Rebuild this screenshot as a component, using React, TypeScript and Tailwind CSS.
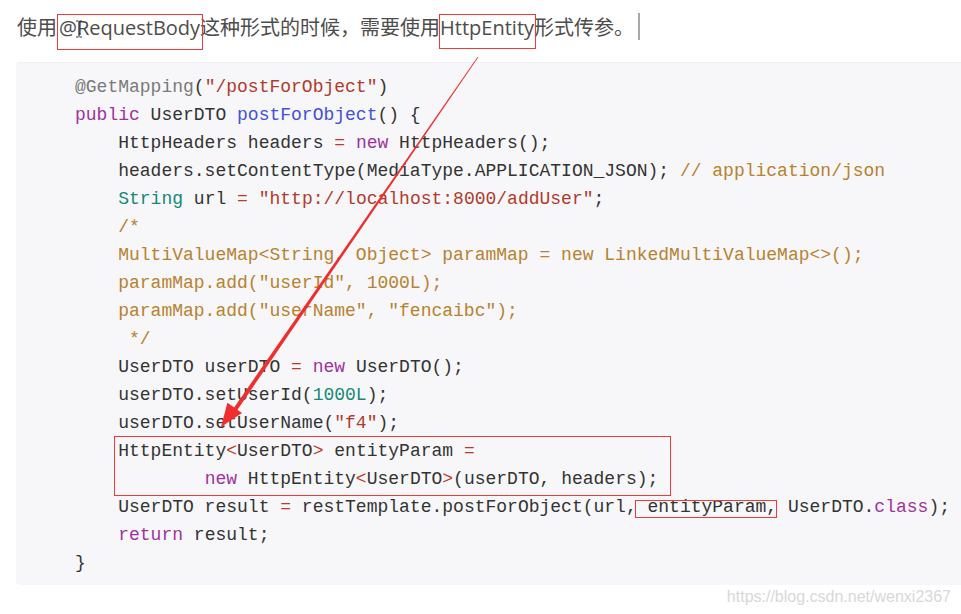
import React from "react";

type Tok = [string, string?];

const DARK = "text-[#333333]";
const KW = "text-[#a0329f]";
const FN = "text-[#4450dd]";
const STR = "text-[#b23a2c]";
const CMT = "text-[#b8822f]";
const TYPE = "text-[#168878]";
const OP = "text-[#c0392b]";
const ANN = "text-[#7a7a7a]";

const lines: Tok[][] = [
  [["@GetMapping", ANN], ["("], ['"/postForObject"', STR], [")"]],
  [["public", KW], [" UserDTO "], ["postForObject", FN], ["() {"]],
  [["    HttpHeaders headers "], ["=", OP], [" "], ["new", KW], [" HttpHeaders();"]],
  [["    headers.setContentType(MediaType.APPLICATION_JSON); "], ["// application/json", CMT]],
  [["    "], ["String", TYPE], [" url "], ["=", OP], [" "], ['"http://localhost:8000/addUser"', STR], [";"]],
  [["    /*", CMT]],
  [["    MultiValueMap<String, Object> paramMap = new LinkedMultiValueMap<>();", CMT]],
  [['    paramMap.add("userId", 1000L);', CMT]],
  [['    paramMap.add("userName", "fencaibc");', CMT]],
  [["     */", CMT]],
  [["    UserDTO userDTO "], ["=", OP], [" "], ["new", KW], [" UserDTO();"]],
  [["    userDTO.setUserId("], ["1000L", TYPE], [");"]],
  [["    userDTO.setUserName("], ['"f4"', STR], [");"]],
];

const boxed: Tok[][] = [
  [["    HttpEntity"], ["<", OP], ["UserDTO"], [">", OP], [" entityParam "], ["=", OP]],
  [["            "], ["new", KW], [" HttpEntity"], ["<", OP], ["UserDTO"], [">", OP], ["(userDTO, headers);"]],
];

function Line({ toks }: { toks: Tok[] }) {
  return (
    <div className="h-[28px] leading-[28px] whitespace-pre">
      {toks.map(([t, c], i) => (
        <span key={i} className={c || DARK}>
          {t}
        </span>
      ))}
    </div>
  );
}

function Arrow() {
  return (
    <svg className="absolute left-0 top-0 pointer-events-none" width="961" height="614">
      <polygon points="478.5,57 477.5,57 232.9,409.2 236.3,411.5" fill="#ef2e2e" />
      <polygon points="221,427 227.4,402.8 242,413" fill="#ef2e2e" />
    </svg>
  );
}

// mouse I-beam cursor sitting over the "R"
function IBeam() {
  return (
    <svg className="absolute left-[16px] top-[6px]" width="8" height="18" viewBox="0 0 8 18">
      <path d="M1 1h2.5M4.5 1H7M4 1.5v15M1 17h2.5M4.5 17H7" stroke="#333" strokeWidth="1.2" fill="none" />
    </svg>
  );
}

export default function App() {
  return (
    <div className="relative w-[961px] h-[614px] bg-white overflow-hidden">
      <div className="h-[56px] pl-[17px] pt-[14px] flex items-start text-[20px] leading-[28px] text-[#4d4d4d] font-['Open_Sans','Noto_Sans_CJK_SC',sans-serif]">
        <span>使用</span>
        <span className="relative ml-[2px]">
          @RequestBody
          <span className="absolute -left-[2px] -right-[3px] top-0 -bottom-[8px] border border-[#ef3a3a]" />
          <IBeam />
        </span>
        <span>这种形式的时候，需要使用</span>
        <span className="relative">
          HttpEntity
          <span className="absolute -left-[1px] -right-[2px] top-0 -bottom-[7px] border border-[#ef3a3a]" />
        </span>
        <span>形式传参。</span>
        <span className="ml-[4px] mt-[-1px] w-[2px] h-[27px] bg-[#a8a8a8]" />
      </div>

      <div className="ml-[16px] mt-[6px] h-[523px] bg-[#f7f7f9] rounded-l-[4px] border-t border-[#f0f0f2] pt-[10px] pl-[59px] text-[18px] font-['Liberation_Mono',monospace]">
        {lines.map((l, i) => (
          <Line key={i} toks={l} />
        ))}
        <div className="relative">
          {boxed.map((l, i) => (
            <Line key={i} toks={l} />
          ))}
          <div className="absolute left-[39px] -top-[1px] w-[557px] h-[60px] border border-[#ef3a3a]" />
        </div>
        <div className="h-[28px] leading-[28px] whitespace-pre">
          <span className={DARK}>{"    UserDTO result "}</span>
          <span className={OP}>=</span>
          <span className={DARK}>{" restTemplate.postForObject(url,"}</span>
          <span className={`relative ${DARK}`}>
            {" entityParam,"}
            <span className="absolute -left-[2px] right-0 top-[3px] -bottom-[1px] border border-[#ef3a3a]" />
          </span>
          <span className={DARK}>{" UserDTO."}</span>
          <span className={KW}>class</span>
          <span className={DARK}>{");"}</span>
        </div>
        <Line toks={[["    "], ["return", KW], [" result;"]]} />
        <Line toks={[["}"]]} />
      </div>

      <div className="flex justify-end pr-[10px] mt-[2px] text-[16px] leading-[20px] text-[#d8d8d8] font-['Liberation_Sans',sans-serif]">
        https://blog.csdn.net/wenxi2367
      </div>

      <Arrow />
    </div>
  );
}
